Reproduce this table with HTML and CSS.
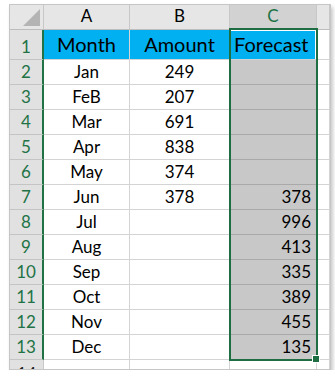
FILE: index.html
```html
<!DOCTYPE html>
<html>
<head>
<meta charset="utf-8">
<link rel="stylesheet" href="styles.css">
</head>
<body>
<div class="sheet">
  <div class="grid">
    <div class="c ch corner"><svg width="18" height="18" viewBox="0 0 18 18"><polygon points="17,0 17,17 0,17" fill="#b4b4b4"/></svg></div>
    <div class="c ch">A</div>
    <div class="c ch">B</div>
    <div class="c ch chsel">C</div>
    <div class="c ch"></div>

    <div class="c rh">1</div>
    <div class="c hd">Month</div>
    <div class="c hd">Amount</div>
    <div class="c hd active">Forecast</div>
    <div class="c"></div>

    <div class="c rh">2</div><div class="c">Jan</div><div class="c">249</div><div class="c sel"></div><div class="c"></div>
    <div class="c rh">3</div><div class="c">FeB</div><div class="c">207</div><div class="c sel"></div><div class="c"></div>
    <div class="c rh">4</div><div class="c">Mar</div><div class="c">691</div><div class="c sel"></div><div class="c"></div>
    <div class="c rh">5</div><div class="c">Apr</div><div class="c">838</div><div class="c sel"></div><div class="c"></div>
    <div class="c rh">6</div><div class="c">May</div><div class="c">374</div><div class="c sel"></div><div class="c"></div>
    <div class="c rh">7</div><div class="c">Jun</div><div class="c">378</div><div class="c sel">378</div><div class="c"></div>
    <div class="c rh">8</div><div class="c">Jul</div><div class="c"></div><div class="c sel">996</div><div class="c"></div>
    <div class="c rh">9</div><div class="c">Aug</div><div class="c"></div><div class="c sel">413</div><div class="c"></div>
    <div class="c rh">10</div><div class="c">Sep</div><div class="c"></div><div class="c sel">335</div><div class="c"></div>
    <div class="c rh">11</div><div class="c">Oct</div><div class="c"></div><div class="c sel">389</div><div class="c"></div>
    <div class="c rh">12</div><div class="c">Nov</div><div class="c"></div><div class="c sel">455</div><div class="c"></div>
    <div class="c rh">13</div><div class="c">Dec</div><div class="c"></div><div class="c sel">135</div><div class="c"></div>
    <div class="c rh rh-off">14</div><div class="c"></div><div class="c"></div><div class="c"></div><div class="c"></div>
  </div>
  <div class="selection"></div>
  <div class="handle"></div>
</div>
</body>
</html>
```
FILE: styles.css
```css
html, body {
  margin: 0;
  padding: 0;
  background: #ffffff;
}
body {
  padding: 4px 0 0 9px;
  font-family: Lato, "Liberation Sans", sans-serif;
}
.sheet {
  position: relative;
  width: 320px;
  height: 364px;
  border: 1px solid #c6c6c6;
  box-shadow: 2px 3px 4px rgba(0, 0, 0, 0.22);
  overflow: hidden;
  background: #fff;
}
.grid {
  display: grid;
  grid-template-columns: 34px 86px 100px 87px 13px;
  grid-template-rows: 25px 30px repeat(13, 25px);
}
.c {
  box-sizing: border-box;
  border-right: 1px solid #d4d4d4;
  border-bottom: 1px solid #d4d4d4;
  display: flex;
  align-items: flex-end;
  justify-content: center;
  font-size: 17px;
  line-height: 17px;
  padding-bottom: 4px;
  color: #000;
  white-space: nowrap;
  overflow: hidden;
}
.ch {
  background: #e6e6e6;
  border-right-color: #c8c8c8;
  border-bottom-color: #bdbdbd;
  padding-bottom: 5px;
}
.corner {
  align-items: flex-end;
  justify-content: flex-end;
  padding: 0 2px 2px 0;
}
.chsel {
  background: #d2d2d2;
  color: #217346;
}
.rh {
  background: #e1e1e1;
  color: #217346;
  border-right: 2px solid #217346;
  border-bottom-color: #c4c4c4;
}
.rh-off {
  color: #222;
  border-right: 1px solid #c8c8c8;
  align-items: flex-start;
  padding-top: 5px;
}
.hd {
  background: #00b0f0;
  font-size: 20px;
  line-height: 20px;
  padding-bottom: 5px;
}
.active {
  justify-content: flex-start;
  padding-left: 4px;
  box-shadow: inset 1px 1px 0 #fff, inset -1px 0 0 #fff;
}
.sel {
  background: #c8c8c8;
  border-bottom-color: #a9a9a9;
  justify-content: flex-end;
  padding-right: 5px;
}
.selection {
  position: absolute;
  left: 219px;
  top: 23px;
  width: 89px;
  height: 333px;
  box-sizing: border-box;
  border: 2px solid #1f6e43;
  pointer-events: none;
}
.handle {
  position: absolute;
  left: 303px;
  top: 351px;
  width: 6px;
  height: 6px;
  background: #1f6e43;
  outline: 1px solid #fff;
}
```
